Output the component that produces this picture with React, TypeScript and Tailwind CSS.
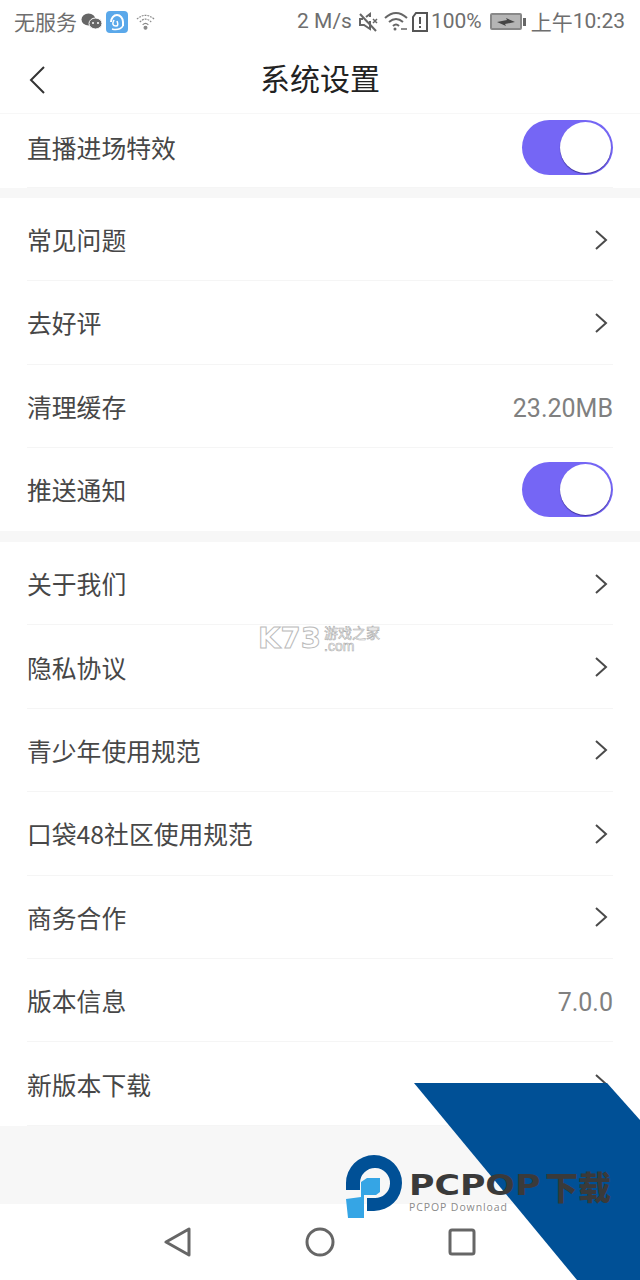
const font = { fontFamily: '"Noto Sans CJK SC", "Noto Sans", sans-serif' };
const roboto = { fontFamily: "Roboto, sans-serif" };

function Chevron() {
  return (
    <svg width="14" height="22" viewBox="0 0 14 22" fill="none" stroke="#4a4a4a" strokeWidth="2">
      <path d="M2 2 L12 11 L2 20" />
    </svg>
  );
}

function Toggle() {
  return (
    <div className="w-[91px] h-[55px] rounded-full bg-[#7566f5] flex items-center justify-end pr-[2px]">
      <div className="w-[51px] h-[51px] rounded-full bg-white shadow-[0_1px_1px_#3c2f9c]" />
    </div>
  );
}

function Row({ label, value, toggle, last, h = "h-[83.4px]", pad = "pt-[1px]" }: { label: string; value?: string; toggle?: boolean; last?: boolean; h?: string; pad?: string }) {
  return (
    <div className={`${h} ${pad} mx-[27px] flex items-center justify-between ${last ? "" : "border-b border-[#f5f5f5]"}`}>
      <span className="text-[24.8px] text-[#474747] leading-none">{label}</span>
      {toggle ? <Toggle /> : value ? <span className="text-[25px] text-[#808080] leading-none translate-y-[2px]" style={roboto}>{value}</span> : <div className="pr-[5px] flex"><Chevron /></div>}
    </div>
  );
}

function StatusBar() {
  return (
    <div className="h-[40px] pt-[3px] flex items-center justify-between pl-[14px] pr-[15px] text-[#6e6e6e] text-[21px] leading-none">
      <div className="flex items-center gap-[4px]">
        <span>无服务</span>
        <svg width="21" height="17" viewBox="0 0 21 17" fill="#666">
          <ellipse cx="7.5" cy="6.5" rx="7" ry="6" />
          <ellipse cx="14.5" cy="10.5" rx="6.5" ry="5.5" stroke="#fff" strokeWidth="1" />
          <circle cx="12" cy="10" r="1" fill="#fff" />
          <circle cx="17" cy="10" r="1" fill="#fff" />
        </svg>
        <svg width="22" height="22" viewBox="0 0 22 22">
          <rect width="22" height="22" rx="4" fill="#5aa8ea" />
          <path d="M5 11 A6 7 0 0 1 17 11 V15" fill="none" stroke="#fff" strokeWidth="2" />
          <path d="M8 9 Q5 15 10 15 Q13 15 11 10" fill="none" stroke="#fff" strokeWidth="1.5" />
          <path d="M6 18 Q13 20 17 15" fill="none" stroke="#fff" strokeWidth="1.5" />
        </svg>
        <svg width="21" height="18" viewBox="0 0 22 18" fill="none" stroke="#888" strokeWidth="1.2" className="ml-[3px]">
          <path d="M2 6 Q11 -2 20 6" strokeDasharray="2 1" />
          <path d="M5 9 Q11 3 17 9" strokeDasharray="2 1" />
          <path d="M8 12 Q11 9 14 12" />
          <circle cx="11" cy="15" r="1.5" fill="#888" />
        </svg>
      </div>
      <div className="flex items-center">
        <span className="text-[21px]" style={roboto}>2 M/s</span>
        <svg width="20" height="20" viewBox="0 0 20 20" fill="none" stroke="#666" strokeWidth="2" className="ml-[6px]">
          <path d="M5 7 H2 V13 H6 L12 17 V9" />
          <path d="M8 5 L12 2 V5" />
          <path d="M2 2 L18 19" />
          <path d="M15 7 L19 11 M19 7 L15 11" strokeWidth="1.5" />
        </svg>
        <svg width="24" height="21" viewBox="0 0 24 21" fill="none" stroke="#666" strokeWidth="2" className="ml-[6px]">
          <path d="M1 7 Q12 -3 23 7" />
          <path d="M5 11 Q12 5 19 11" />
          <path d="M9 15 Q12 12 15 15" />
          <circle cx="11" cy="18" r="1.5" fill="#666" stroke="none" />
          <path d="M17 18 h6" strokeWidth="1.5" />
        </svg>
        <svg width="16" height="20" viewBox="0 0 16 20" fill="none" stroke="#555" strokeWidth="2" className="ml-[4px]">
          <path d="M4 1 H15 V19 H1 V5 Z" />
          <path d="M8 5 V12 M8 14 V16" />
        </svg>
        <span className="ml-[3px] text-[21px]" style={roboto}>100%</span>
        <div className="ml-[8px] w-[32px] h-[17px] border-2 border-[#888] rounded-[2px] bg-[#b5b5b5] flex items-center justify-center">
          <svg width="18" height="8" viewBox="0 0 18 8" fill="#444"><path d="M0 4 L10 2 L9 0 L18 4 L8 6 L9 8 Z" /></svg>
        </div>
        <div className="ml-[1px] w-[3px] h-[8px] bg-[#666]" />
        <span className="ml-[5px] text-[21px]">上午</span>
        <span className="text-[21px]" style={roboto}>10:23</span>
      </div>
    </div>
  );
}

function Nav() {
  return (
    <div className="h-[76px] bg-white flex items-center gap-[113px] pl-[164px] pb-[1px]">
      <svg width="28" height="32" viewBox="0 0 28 32" fill="none" stroke="#666" strokeWidth="3" strokeLinejoin="round"><path d="M25 3 V29 L2 16 Z" /></svg>
      <svg width="30" height="30" viewBox="0 0 30 30" fill="none" stroke="#666" strokeWidth="3"><circle cx="15" cy="15" r="13" /></svg>
      <svg width="28" height="28" viewBox="0 0 28 28" fill="none" stroke="#666" strokeWidth="3" strokeLinejoin="round"><rect x="2" y="2" width="24" height="24" rx="2" /></svg>
    </div>
  );
}

export default function App() {
  return (
    <div className="relative w-[640px] h-[1280px] overflow-hidden bg-[#f7f7f7] flex flex-col" style={font}>
      <div className="bg-white">
        <StatusBar />
        <div className="h-[74px] flex items-center justify-center relative border-b border-[#f7f7f7]">
          <svg width="18" height="30" viewBox="0 0 18 30" fill="none" stroke="#333" strokeWidth="2" className="absolute left-[29px] top-[25px]">
            <path d="M15 2 L2 15 L15 28" />
          </svg>
          <span className="text-[30px] text-[#222] leading-none">系统设置</span>
        </div>
      </div>
      <div className="bg-white">
        <Row label="直播进场特效" toggle h="h-[74px]" pad="pb-[7px]" />
      </div>
      <div className="bg-white mt-[10px]">
        <Row label="常见问题" h="h-[83.25px]" />
        <Row label="去好评" h="h-[83.25px]" />
        <Row label="清理缓存" value="23.20MB" h="h-[83.25px]" />
        <Row label="推送通知" toggle last h="h-[83.25px]" />
      </div>
      <div className="bg-white mt-[11px]">
        <Row label="关于我们" />
        <Row label="隐私协议" />
        <Row label="青少年使用规范" />
        <Row label="口袋48社区使用规范" />
        <Row label="商务合作" />
        <Row label="版本信息" value="7.0.0" />
        <Row label="新版本下载" />
      </div>
      <div className="flex-1" />
      <Nav />

      {/* K73 watermark */}
      <div className="absolute left-[258px] top-[624px] flex items-center opacity-80">
        <span className="w-[66px] text-[29px] leading-none font-bold text-white [-webkit-text-stroke:1px_#aaa]" style={{ fontFamily: '"DejaVu Sans", sans-serif' }}>K73</span>
        <div className="flex flex-col leading-none">
          <span className="text-[14px] text-white [-webkit-text-stroke:0.6px_#999] leading-[14px]">游戏之家</span>
          <span className="text-[14px] text-white [-webkit-text-stroke:0.6px_#999] leading-[14px]" style={{ fontFamily: '"Liberation Sans", sans-serif' }}>.com</span>
        </div>
      </div>

      {/* PCPOP overlay */}
      <svg className="absolute left-0 top-0" width="640" height="1280" viewBox="0 0 640 1280">
        <polygon points="414,1083 607,1083 640,1120 640,1280 577,1280" fill="#005096" />
        <path d="M374 1155 A 28 28 0 0 1 374 1211 H367 V1198 H374 A 15 15 0 1 0 360 1183 V1190 H346 V1183 A 28 28 0 0 1 374 1155 Z" fill="#005096" />
        <path d="M367 1178 L380 1178 V1192 L376 1195 H364 V1218 H348 L346 1199 L361 1197 V1182 Z" fill="#35a5e5" />
      </svg>
      <div className="absolute left-[409px] top-[1168px] w-[210px]">
        <div className="flex items-center leading-none text-[#3a3a3a] font-bold">
          <span className="w-[136px]" style={{ fontFamily: '"DejaVu Sans", sans-serif' }}>
            <span className="inline-block origin-left scale-x-[1.24] text-[28px] font-black leading-[36px]">PCPOP</span>
          </span>
          <span className="text-[33px] font-black leading-[36px]">下载</span>
        </div>
        <div className="text-[10.5px] leading-none tracking-[0.9px] text-[#8a8a8a] mt-[-2px]" style={{ fontFamily: '"Open Sans", sans-serif' }}>PCPOP Download</div>
      </div>
    </div>
  );
}
